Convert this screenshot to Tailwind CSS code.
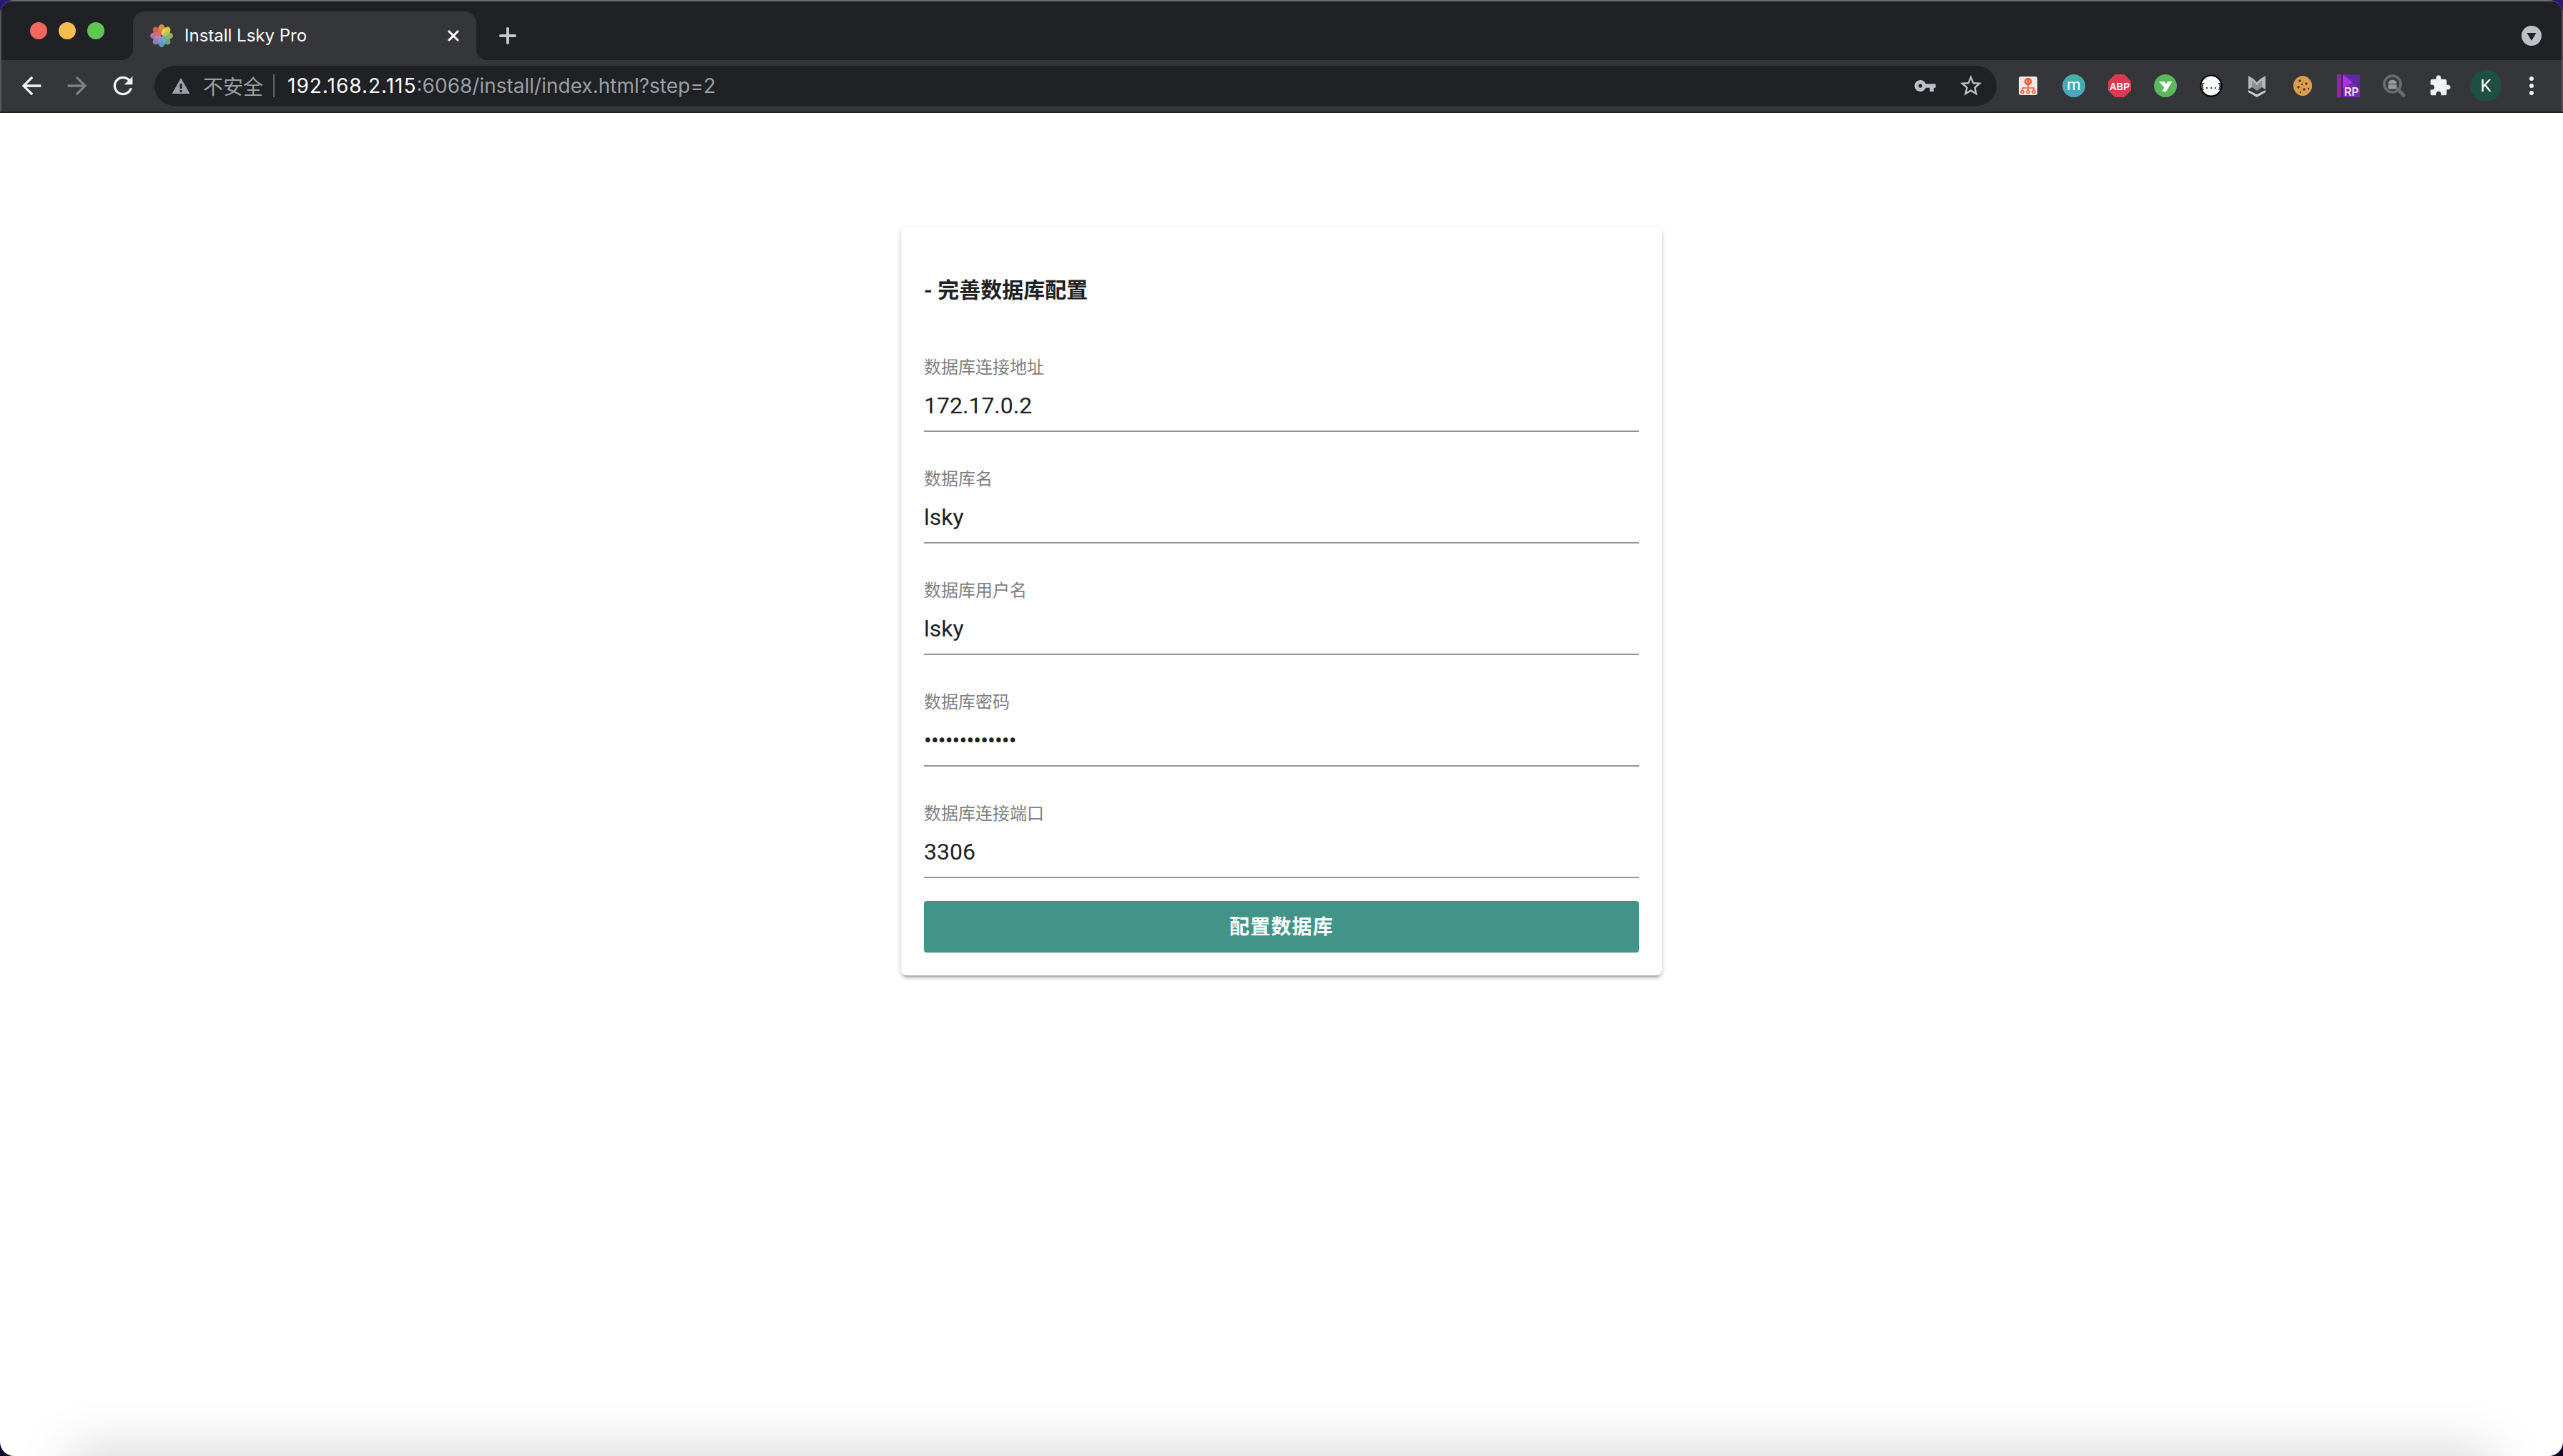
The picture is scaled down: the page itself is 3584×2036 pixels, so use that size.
<!DOCTYPE html>
<html lang="zh-CN">
<head>
    <meta charset="UTF-8">
    <meta name="viewport" content="width=device-width, initial-scale=1.0">
    <title>Install Lsky Pro</title>
    <script src="https://cdn.jsdelivr.net/npm/@tailwindcss/browser@4"></script>
</head>
<body class="h-screen w-screen overflow-hidden bg-[linear-gradient(to_bottom,#2c1678,#0b0a2e)] font-['Roboto','Noto_Sans_CJK_SC',sans-serif]">
    <div class="relative flex h-full flex-col overflow-hidden rounded-[20px] bg-white">

        <!-- tab strip -->
        <div class="flex h-[84px] shrink-0 items-end bg-[#202124] shadow-[inset_0_2px_0_#6b6b6d,inset_2px_0_0_#55555a,inset_-2px_0_0_#55555a]">
            <div class="flex w-[186px] shrink-0 gap-4 self-start pl-[42px] pt-[31px]">
                <span class="h-6 w-6 rounded-full bg-[#f2685f]"></span>
                <span class="h-6 w-6 rounded-full bg-[#f5bd4f]"></span>
                <span class="h-6 w-6 rounded-full bg-[#61c554]"></span>
            </div>
            <div class="relative flex h-[68px] w-[480px] items-center gap-4 rounded-t-2xl bg-[#35363a] pl-6 pr-[22px]">
                <span class="absolute bottom-0 -left-4 h-4 w-4 bg-[radial-gradient(circle_at_0_0,transparent_16px,#35363a_16.5px)]"></span>
                <span class="absolute -right-4 bottom-0 h-4 w-4 bg-[radial-gradient(circle_at_100%_0,transparent_16px,#35363a_16.5px)]"></span>
                <svg class="h-8 w-8 shrink-0" viewBox="0 0 32 32">
                    <g fill-opacity="0.85">
                        <ellipse cx="16" cy="7.5" rx="5" ry="7.5" fill="#f0a445"/>
                        <ellipse cx="16" cy="7.5" rx="5" ry="7.5" fill="#f5e04f" transform="rotate(45 16 16)"/>
                        <ellipse cx="16" cy="7.5" rx="5" ry="7.5" fill="#a9c75c" transform="rotate(90 16 16)"/>
                        <ellipse cx="16" cy="7.5" rx="5" ry="7.5" fill="#6dbb94" transform="rotate(135 16 16)"/>
                        <ellipse cx="16" cy="7.5" rx="5" ry="7.5" fill="#67a9dc" transform="rotate(180 16 16)"/>
                        <ellipse cx="16" cy="7.5" rx="5" ry="7.5" fill="#9b8dc7" transform="rotate(225 16 16)"/>
                        <ellipse cx="16" cy="7.5" rx="5" ry="7.5" fill="#c67fb0" transform="rotate(270 16 16)"/>
                        <ellipse cx="16" cy="7.5" rx="5" ry="7.5" fill="#e56a5f" transform="rotate(315 16 16)"/>
                    </g>
                </svg>
                <span class="flex-1 font-['Inter',sans-serif] text-[24px] leading-8 text-white">Install Lsky Pro</span>
                <svg class="h-5 w-5 shrink-0" viewBox="0 0 20 20" fill="none" stroke="#ffffff" stroke-width="3"><path d="M3 3l14 14M17 3L3 17"/></svg>
            </div>
            <div class="flex h-[68px] w-[88px] items-center justify-center">
                <svg class="h-7 w-7" viewBox="0 0 28 28" fill="none" stroke="#c4c7cc" stroke-width="4" stroke-linecap="round"><path d="M14 4v20M4 14h20"/></svg>
            </div>
            <div class="flex h-[68px] flex-1 items-center justify-end pr-[30px]">
                <svg class="h-7 w-7" viewBox="0 0 28 28"><circle cx="14" cy="14" r="14" fill="#bdc1c6"/><path d="M7.5 10h13L14 21z" fill="#202124"/></svg>
            </div>
        </div>

        <!-- toolbar -->
        <div class="flex h-[74px] shrink-0 items-start border-b-2 border-[#202124] bg-[#35363a] pl-3 shadow-[inset_2px_0_0_#55555a,inset_-2px_0_0_#55555a]">
            <div class="flex h-[72px] w-16 items-center justify-center">
                <svg class="h-10 w-10" viewBox="0 0 24 24" fill="#f1f3f4"><path d="M20 11H7.83l5.59-5.59L12 4l-8 8 8 8 1.41-1.41L7.83 13H20v-2z"/></svg>
            </div>
            <div class="flex h-[72px] w-16 items-center justify-center">
                <svg class="h-10 w-10" viewBox="0 0 24 24" fill="#7f8184"><path d="M4 11h12.17l-5.59-5.59L12 4l8 8-8 8-1.41-1.41L16.17 13H4v-2z"/></svg>
            </div>
            <div class="flex h-[72px] w-16 items-center justify-center">
                <svg class="h-10 w-10" viewBox="0 0 24 24" fill="#f1f3f4"><path d="M17.65 6.35C16.2 4.9 14.21 4 12 4c-4.42 0-7.99 3.58-7.99 8s3.57 8 7.99 8c3.73 0 6.84-2.55 7.73-6h-2.08c-.82 2.33-3.04 4-5.65 4-3.31 0-6-2.69-6-6s2.69-6 6-6c1.66 0 3.14.69 4.22 1.78L13 11h7V4l-2.35 2.35z"/></svg>
            </div>

            <div class="mt-2 ml-3 flex h-14 w-[2576px] items-center rounded-full bg-[#202124] pl-6 pr-0.5">
                <svg class="h-6 w-[26px] shrink-0" viewBox="0 0 26 24" fill="#9aa0a6"><path d="M13 1L0.5 23h25zM11.5 9h3v7h-3zM11.5 18h3v3h-3z" fill-rule="evenodd"/></svg>
                <span class="ml-[18px] text-[28px] leading-8 text-[#9aa0a6] font-['Noto_Sans_CJK_SC',sans-serif]">不安全</span>
                <span class="ml-[14px] h-8 w-0.5 bg-[#5f6368]"></span>
                <span class="ml-[18px] flex-1 font-['Inter',sans-serif] text-[28px] leading-8 text-[#9aa0a6]"><span class="tracking-[1px] text-white">192.168.2.115</span>:6068/install/index.html?step=2</span>
                <span class="flex w-16 justify-center pr-1">
                    <svg class="h-8 w-8" viewBox="0 0 24 24" fill="#bdc1c6"><path d="M12.65 10C11.83 7.67 9.61 6 7 6c-3.31 0-6 2.69-6 6s2.69 6 6 6c2.61 0 4.83-1.67 5.65-4H17v4h4v-4h2v-4H12.65zM7 14c-1.1 0-2-.9-2-2s.9-2 2-2 2 .9 2 2-.9 2-2 2z"/></svg>
                </span>
                <span class="flex w-16 justify-center pr-1">
                    <svg class="h-9 w-9" viewBox="0 0 24 24" fill="#bdc1c6"><path d="M22 9.24l-7.19-.62L12 2 9.19 8.63 2 9.24l5.46 4.73L5.82 21 12 17.27 18.18 21l-1.63-7.03L22 9.24zM12 15.4l-3.76 2.27 1-4.28-3.32-2.88 4.38-.38L12 6.1l1.71 4.04 4.38.38-3.32 2.88 1 4.28L12 15.4z"/></svg>
                </span>
            </div>

            <div class="ml-3 flex h-[72px] items-center">
                <div class="flex w-16 justify-center">
                    <svg class="h-[26px] w-[26px]" viewBox="0 0 26 26">
                        <rect width="26" height="26" rx="3" fill="#f1e9e4"/>
                        <g fill="none" stroke="#e8603c" stroke-width="1.6">
                            <circle cx="13" cy="7" r="4.5" fill="#e8603c"/>
                            <path d="M13 11v5M5 20v-4h16v4M13 16v4"/>
                            <circle cx="5" cy="21.5" r="2"/><circle cx="13" cy="21.5" r="2"/><circle cx="21" cy="21.5" r="2"/>
                        </g>
                        <path d="M11.5 5.5L10 7l1.5 1.5M14.5 5.5L16 7l-1.5 1.5" fill="none" stroke="#ffffff" stroke-width="1"/>
                    </svg>
                </div>
                <div class="flex w-16 justify-center">
                    <svg class="h-8 w-8" viewBox="0 0 32 32">
                        <defs><linearGradient id="mGrad" x1="0" y1="0" x2="0" y2="1"><stop offset="0" stop-color="#3fb3a6"/><stop offset="1" stop-color="#4ba5c8"/></linearGradient></defs>
                        <circle cx="16" cy="16" r="16" fill="url(#mGrad)"/>
                        <text x="16" y="22" text-anchor="middle" font-family="Roboto" font-size="22" fill="#ffffff">m</text>
                    </svg>
                </div>
                <div class="flex w-16 justify-center">
                    <svg class="h-8 w-8" viewBox="0 0 32 32">
                        <path d="M9.5 0h13L32 9.5v13L22.5 32h-13L0 22.5v-13z" fill="#dc3a50"/>
                        <text x="2" y="21.5" textLength="28" lengthAdjust="spacingAndGlyphs" font-family="Liberation Sans" font-weight="700" font-size="15" fill="#ffffff">ABP</text>
                    </svg>
                </div>
                <div class="flex w-16 justify-center">
                    <svg class="h-8 w-8" viewBox="0 0 32 32">
                        <circle cx="16" cy="16" r="16" fill="#5cb85c"/>
                        <path d="M7 10h7.5l2.5 4 2-4h6.5L17 24h-6l3.5-5.5z" fill="#ffffff"/>
                    </svg>
                </div>
                <div class="flex w-16 justify-center">
                    <svg class="h-8 w-8" viewBox="0 0 32 32">
                        <circle cx="16" cy="16" r="14.5" fill="#ffffff" stroke="#000000" stroke-width="2"/>
                        <text x="16" y="20" text-anchor="middle" font-family="DejaVu Sans Mono" font-weight="700" font-size="10" fill="#000000">{...}</text>
                    </svg>
                </div>
                <div class="flex w-16 justify-center">
                    <svg class="h-8 w-6" viewBox="0 0 24 32">
                        <path d="M0 2l7 4 5 5 5-5 7-4v19l-5-3V9l-7 7-7-7v9l-5 3z" fill="#b4b6b8"/>
                        <path d="M0 22l12 6 12-6v3L12 32 0 25z" fill="#c9cbcd"/>
                        <path d="M5 9l7 7 7-7v9l-7 5-7-5z" fill="#8c8e90"/>
                    </svg>
                </div>
                <div class="flex w-16 justify-center">
                    <svg class="h-[30px] w-[30px]" viewBox="0 0 30 30">
                        <path d="M15 1c6 0 12 5 13 12 1 8-5 16-13 16S1 21 2 13C3 6 9 1 15 1z" fill="#d99f4c"/>
                        <g fill="#5a3316"><circle cx="11" cy="8" r="1.8"/><circle cx="20" cy="12" r="1.8"/><circle cx="9" cy="17" r="1.8"/><circle cx="17" cy="20" r="1.8"/><circle cx="14" cy="13" r="1.2"/><circle cx="23" cy="19" r="1.2"/><circle cx="12" cy="24" r="1.2"/></g>
                    </svg>
                </div>
                <div class="flex w-16 justify-center">
                    <svg class="h-8 w-8" viewBox="0 0 32 32">
                        <rect width="32" height="32" fill="#7b2ab0"/>
                        <rect x="0" width="6" height="32" fill="#93289f"/>
                        <rect x="6" width="2" height="32" fill="#4b1a74"/>
                        <path d="M8 0h24v22L8 0z" fill="#5d2a9f"/>
                        <path d="M8 0l14 11L8 20z" fill="#a834e6"/>
                        <text x="10" y="30" textLength="20" lengthAdjust="spacingAndGlyphs" font-family="Liberation Sans" font-weight="700" font-size="17" fill="#f4e4fa">RP</text>
                    </svg>
                </div>
                <div class="flex w-16 justify-center">
                    <svg class="h-8 w-8" viewBox="0 0 32 32">
                        <circle cx="13.5" cy="13.5" r="11.5" fill="#3a3b3f" stroke="#6c6d70" stroke-width="3.5"/>
                        <path d="M21 21l8 8" stroke="#6c6d70" stroke-width="5" stroke-linecap="round"/>
                        <path d="M7.5 13a6 5.5 0 0 1 12 0z" fill="#98999b"/>
                        <path d="M7.5 14h12v4.5a2 2 0 0 1-2 2h-8a2 2 0 0 1-2-2z" fill="#98999b"/>
                    </svg>
                </div>
                <div class="flex w-16 justify-center">
                    <svg class="h-8 w-8" viewBox="0 0 24 24" fill="#f1f3f4"><path d="M20.5 11H19V7c0-1.1-.9-2-2-2h-4V3.5C13 2.12 11.88 1 10.5 1S8 2.12 8 3.5V5H4c-1.1 0-1.99.9-1.99 2v3.8H3.5c1.49 0 2.7 1.21 2.7 2.7s-1.21 2.7-2.7 2.7H2V20c0 1.1.9 2 2 2h3.8v-1.5c0-1.49 1.21-2.7 2.7-2.7 1.49 0 2.7 1.21 2.7 2.7V22H17c1.1 0 2-.9 2-2v-4h1.5c1.38 0 2.5-1.12 2.5-2.5S21.88 11 20.5 11z"/></svg>
                </div>
                <div class="flex w-16 justify-center">
                    <span class="flex h-11 w-11 items-center justify-center rounded-full bg-[#1e4f42] text-[24px] text-white">K</span>
                </div>
                <div class="flex w-16 flex-col items-center gap-1">
                    <span class="h-1.5 w-1.5 rounded-full bg-[#f1f3f4]"></span>
                    <span class="h-1.5 w-1.5 rounded-full bg-[#f1f3f4]"></span>
                    <span class="h-1.5 w-1.5 rounded-full bg-[#f1f3f4]"></span>
                </div>
            </div>
        </div>

        <!-- page -->
        <main class="flex-1 pt-40">
            <div class="mx-auto w-[1064px] rounded-lg bg-white p-8 shadow-[0_6px_2px_-4px_rgba(0,0,0,0.2),0_4px_4px_0_rgba(0,0,0,0.14),0_2px_10px_0_rgba(0,0,0,0.12)]">
                <h1 class="h-[98px] pt-10 text-[30px] leading-8 font-bold text-[#212121]">- 完善数据库配置</h1>

                <div class="flex h-[156px] flex-col justify-end">
                    <label class="text-[24px] leading-8 text-[#808080]">数据库连接地址</label>
                    <div class="mt-0.5 flex h-[72px] items-center border-b-2 border-[#949494] text-[32px] text-[#212121]">172.17.0.2</div>
                </div>
                <div class="flex h-[156px] flex-col justify-end">
                    <label class="text-[24px] leading-8 text-[#808080]">数据库名</label>
                    <div class="mt-0.5 flex h-[72px] items-center border-b-2 border-[#949494] text-[32px] text-[#212121]">lsky</div>
                </div>
                <div class="flex h-[156px] flex-col justify-end">
                    <label class="text-[24px] leading-8 text-[#808080]">数据库用户名</label>
                    <div class="mt-0.5 flex h-[72px] items-center border-b-2 border-[#949494] text-[32px] text-[#212121]">lsky</div>
                </div>
                <div class="flex h-[156px] flex-col justify-end">
                    <label class="text-[24px] leading-8 text-[#808080]">数据库密码</label>
                    <div class="mt-0.5 flex h-[72px] items-center border-b-2 border-[#949494] text-[32px] tracking-[-0.9px] text-[#212121]">•••••••••••••</div>
                </div>
                <div class="flex h-[156px] flex-col justify-end">
                    <label class="text-[24px] leading-8 text-[#808080]">数据库连接端口</label>
                    <div class="mt-0.5 flex h-[72px] items-center border-b-2 border-[#949494] text-[32px] text-[#212121]">3306</div>
                </div>

                <button class="mt-8 block h-[72px] w-full rounded bg-[#429488] pt-0.5 text-[28px] font-bold tracking-[0.04em] text-white">配置数据库</button>
            </div>
        </main>

        <!-- window shadow falling on the bottom edge -->
        <div class="absolute top-full right-[100px] left-[100px] h-10 shadow-[0_0_72px_rgba(0,0,0,0.25)]"></div>
    </div>
</body>
</html>
